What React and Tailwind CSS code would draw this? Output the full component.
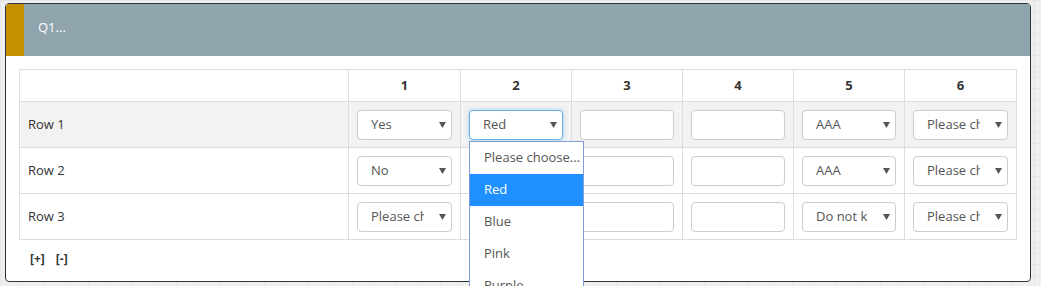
import React from "react";

const font = { fontFamily: '"Open Sans", "Liberation Sans", sans-serif' };

function Arrow() {
  return (
    <svg width="7" height="6" viewBox="0 0 7 6" className="shrink-0">
      <path d="M0 0 L7 0 L3.5 6 Z" fill="#555" />
    </svg>
  );
}

function Select({ value, focus }) {
  return (
    <div
      className={
        "flex h-[30px] w-full items-center rounded-[4px] border bg-white pl-[13px] pr-[5px] text-[13px] text-[#555] " +
        (focus
          ? "border-[#66afe9] shadow-[0_0_4px_rgba(102,175,233,0.6)]"
          : "border-[#ccc]")
      }
    >
      <div className="mr-[15px] min-w-0 flex-1 overflow-hidden whitespace-nowrap">{value}</div>
      <Arrow />
    </div>
  );
}

function Input() {
  return <div className="h-[30px] w-full rounded-[4px] border border-[#ccc] bg-white" />;
}

function Dropdown() {
  const items = ["Please choose...", "Red", "Blue", "Pink", "Purple"];
  return (
    <div className="absolute left-[8px] top-[39px] z-10 w-[115px] border border-[#7f9ed6] bg-white text-[13px] text-[#555]">
      {items.map((it) => (
        <div
          key={it}
          className={
            "flex h-[32px] items-center whitespace-nowrap pl-[14px] " +
            (it === "Red" ? "bg-[#1e90ff] text-white" : "")
          }
        >
          {it}
        </div>
      ))}
    </div>
  );
}

const rows = [
  { label: "Row 1", cells: [["s", "Yes"], ["s", "Red", true], ["i"], ["i"], ["s", "AAA"], ["s", "Please choose..."]] },
  { label: "Row 2", cells: [["s", "No"], ["s", "Please choose..."], ["i"], ["i"], ["s", "AAA"], ["s", "Please choose..."]] },
  { label: "Row 3", cells: [["s", "Please choose..."], ["s", "Please choose..."], ["i"], ["i"], ["s", "Do not know"], ["s", "Please choose..."]] },
];

export default function App() {
  return (
    <div
      className="h-[286px] w-[1041px] overflow-hidden bg-[#efefef] bg-[linear-gradient(#e6e6e6_1px,transparent_1px),linear-gradient(90deg,#e6e6e6_1px,transparent_1px)] bg-[length:22px_11px] pl-[5px] pt-[3px]"
      style={font}
    >
      <div className="w-[1026px] rounded-[4px] border border-[#2a363c] bg-white text-[#333]">
        <div className="flex h-[52px] bg-[#8fa4ad]">
          <div className="w-[18px] rounded-tl-[3px] bg-[#c58f00]" />
          <div className="pl-[14px] pt-[14px] text-[13px] text-white">Q1...</div>
        </div>
        <div className="px-[13px] pb-[14px] pt-[13px]">
          <table className="w-[997px] table-fixed border-collapse text-[13px]">
            <colgroup>
              <col className="w-[329px]" />
              <col className="w-[112px]" />
              <col className="w-[111px]" />
              <col className="w-[111px]" />
              <col className="w-[111px]" />
              <col className="w-[111px]" />
              <col className="w-[112px]" />
            </colgroup>
            <thead>
              <tr className="h-[32px]">
                <th className="border border-[#ddd]" />
                {[1, 2, 3, 4, 5, 6].map((n) => (
                  <th key={n} className="border border-[#ddd] text-center font-bold">
                    {n}
                  </th>
                ))}
              </tr>
            </thead>
            <tbody>
              {rows.map((r, ri) => (
                <tr key={r.label} className={"h-[46px] " + (ri === 0 ? "bg-[#f2f2f2]" : "")}>
                  <td className="border border-[#ddd] pl-[8px]">{r.label}</td>
                  {r.cells.map((c, ci) => (
                    <td key={ci} className="relative border border-[#ddd] pl-[8px] pr-[8px]">
                      {c[0] === "s" ? <Select value={c[1]} focus={c[2]} /> : <Input />}
                      {ri === 0 && ci === 1 ? <Dropdown /> : null}
                    </td>
                  ))}
                </tr>
              ))}
            </tbody>
          </table>
          <div className="flex gap-[11px] pl-[11px] pt-[11px] text-[12px] font-bold leading-[16px]">
            <span>[+]</span>
            <span>[-]</span>
          </div>
        </div>
      </div>
    </div>
  );
}
